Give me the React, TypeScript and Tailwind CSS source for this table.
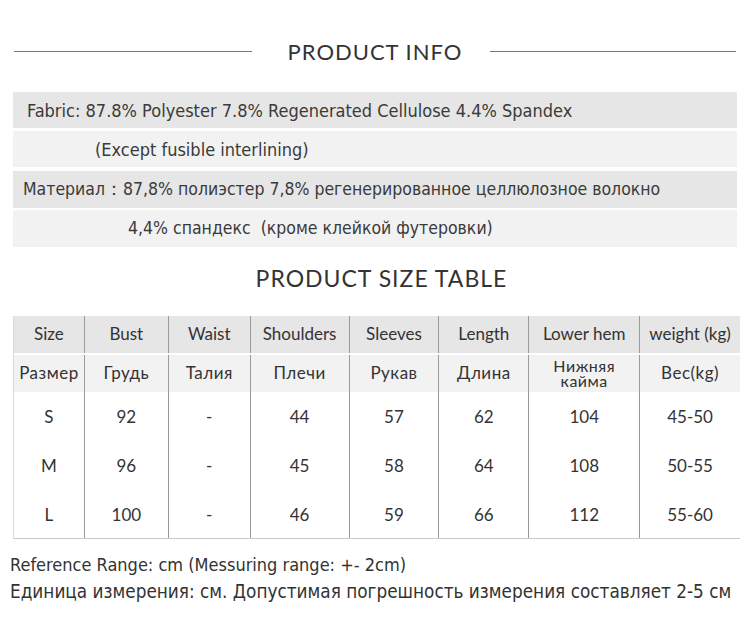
import React from 'react';

const cols = [70, 84, 82, 99, 90, 90, 111, 101];

const headEn = ['Size', 'Bust', 'Waist', 'Shoulders', 'Sleeves', 'Length', 'Lower hem', 'weight (kg)'];
const headRu = ['Размер', 'Грудь', 'Талия', 'Плечи', 'Рукав', 'Длина', 'Нижняя\nкайма', 'Вес(kg)'];
const rows = [
  ['S', '92', '-', '44', '57', '62', '104', '45-50'],
  ['M', '96', '-', '45', '58', '64', '108', '50-55'],
  ['L', '100', '-', '46', '59', '66', '112', '55-60'],
];
const rowH = ['h-[49px]', 'h-[49px]', 'h-[48px]'];

const infoFont = { fontFamily: '"DejaVu Sans Condensed", "Roboto", sans-serif' };
const tableFont = { fontFamily: 'Lato, "Noto Sans", sans-serif' };

const Cell: React.FC<{ i: number; children: React.ReactNode; className?: string }> = ({ i, children, className }) => (
  <div
    className={`flex items-center justify-center text-center ${i > 0 ? 'border-l border-[#9a9a9a]' : ''} ${className ?? ''}`}
    style={{ width: cols[i] }}
  >
    {children}
  </div>
);

export default function App() {
  return (
    <div className="w-[750px] h-[630px] bg-white text-[#333] overflow-hidden">
      {/* product info header */}
      <div className="flex items-center pt-[35px] pl-[14px]">
        <div className="w-[238px] h-px bg-[#777]" />
        <div className="w-[238px] pl-[8px] text-center text-[22px] tracking-[1px] text-[#333]" style={tableFont}>
          PRODUCT INFO
        </div>
        <div className="w-[246px] h-px bg-[#777]" />
      </div>

      <div className="mt-[24px] mx-[13px] flex flex-col text-[#3a3a3a]" style={infoFont}>
        <div className="h-[36px] bg-[#e6e6e6] flex items-center pl-[14px] text-[18px]">
          Fabric: 87.8% Polyester 7.8% Regenerated Cellulose 4.4% Spandex
        </div>
        <div className="h-[36px] mt-[3px] bg-[#f2f2f2] flex items-center pl-[82px] text-[18px]">
          (Except fusible interlining)
        </div>
        <div className="h-[37px] mt-[4px] bg-[#e6e6e6] flex items-center pl-[10px] text-[17.5px]">
          Материал：87,8% полиэстер 7,8% регенерированное целлюлозное волокно
        </div>
        <div className="h-[37px] mt-[2px] bg-[#f2f2f2] flex items-center pl-[115px] text-[17.5px]">
          4,4% спандекс&nbsp; (кроме клейкой футеровки)
        </div>
      </div>

      <div className="mt-[14px] pl-[13px] text-center text-[23px] tracking-[1px]" style={tableFont}>
        PRODUCT SIZE TABLE
      </div>

      <div className="mt-[20px] ml-[13px] w-[727px] border-l border-[#d8d8d8] border-b border-b-[#c8c8c8] text-[#333]" style={tableFont}>
        <div className="flex h-[37px] bg-[#e6e6e6] text-[17px]">
          {headEn.map((h, i) => (
            <Cell key={i} i={i}>{h}</Cell>
          ))}
        </div>
        <div className="flex h-[37px] mt-[2px] bg-[#f2f2f2] text-[17px] tracking-[0.5px]">
          {headRu.map((h, i) => (
            <Cell key={i} i={i} className={i === 6 ? 'whitespace-pre-line leading-[15px] text-[16px]' : ''}>{h}</Cell>
          ))}
        </div>
        {rows.map((r, ri) => (
          <div key={ri} className={`flex ${rowH[ri]} text-[17px]`}>
            {r.map((v, i) => (
              <Cell key={i} i={i} className="pt-[2px]">{v}</Cell>
            ))}
          </div>
        ))}
      </div>

      <div className="mt-[14px] pl-[10px] text-[#333]" style={infoFont}>
        <div className="text-[18px] leading-[24px]">Reference Range: cm (Messuring range: +- 2cm)</div>
        <div className="text-[18.8px] leading-[30px]">Единица измерения: см. Допустимая погрешность измерения составляет 2-5 см</div>
      </div>
    </div>
  );
}
